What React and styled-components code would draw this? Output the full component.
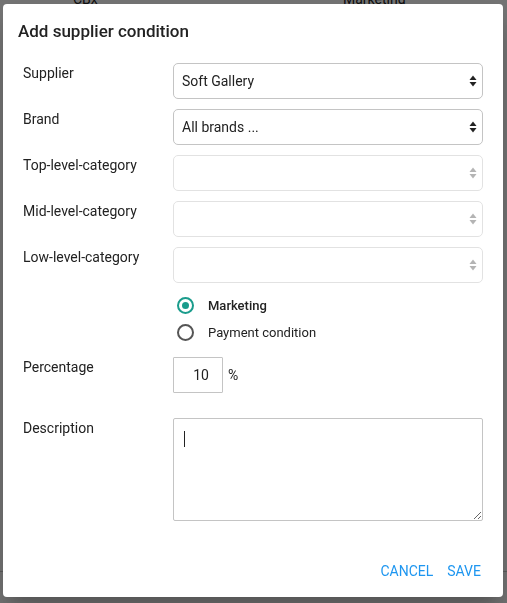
import { useState } from "react";
import styled, { createGlobalStyle } from "styled-components";

const GlobalStyle = createGlobalStyle`
  html, body {
    margin: 0;
    padding: 0;
    background: #fff;
    font-family: Roboto, "Liberation Sans", Arial, sans-serif;
    overflow: hidden;
  }
  * { box-sizing: border-box; }
`;

// page behind the dialog
const Page = styled.div`
  width: 507px;
  height: 603px;
  background: #fff;
`;
const TableRow = styled.div`
  display: grid;
  grid-template-columns: 73px 270px 1fr;
  height: 20px;
  margin-top: -11px;
  font-size: 14px;
  line-height: 20px;
  color: #222;
`;
const TableLine = styled.div`
  margin-top: 562px;
  border-top: 1px solid #c8c8c8;
`;

const Overlay = styled.div`
  position: fixed;
  inset: 0;
  background: rgba(0, 0, 0, 0.55);
  padding: 4px 4px 6px 3px;
`;

const Dialog = styled.div`
  width: 500px;
  height: 593px;
  background: #fff;
  border-radius: 4px;
  box-shadow: 0 11px 15px -7px rgba(0, 0, 0, 0.2), 0 24px 38px 3px rgba(0, 0, 0, 0.14);
  display: flex;
  flex-direction: column;
`;

const Title = styled.h2`
  margin: 0;
  padding: 16px 15px 0;
  font-size: 17px;
  font-weight: 500;
  line-height: 22px;
  color: #222;
`;

const Form = styled.div`
  display: grid;
  grid-template-columns: 150px 310px;
  row-gap: 10px;
  padding: 21px 20px 0;
  align-items: start;
`;

const Label = styled.label`
  font-size: 14px;
  line-height: 20px;
  color: #222;
`;

const SelectWrap = styled.div`
  position: relative;
  height: 36px;
`;

const Select = styled.select`
  appearance: none;
  width: 100%;
  height: 36px;
  border: 1px solid ${(p) => (p.disabled ? "#d6d6d6" : "#c4c4c4")};
  border-radius: 5px;
  background: #fff;
  padding: 0 24px 0 8px;
  font-family: inherit;
  font-size: 14px;
  color: #222;
  outline: none;
`;

const Arrows = styled.svg`
  position: absolute;
  right: 6px;
  top: 12px;
  pointer-events: none;
`;

function ArrowIcon({ muted }) {
  const c = muted ? "#b4b4b4" : "#222";
  return (
    <Arrows width="8" height="12" viewBox="0 0 8 12">
      <path d="M4 0.5 L7.5 5 L0.5 5 Z" fill={c} />
      <path d="M4 11.5 L7.5 7 L0.5 7 Z" fill={c} />
    </Arrows>
  );
}

const RadioGroup = styled.div`
  grid-column: 2;
  display: flex;
  flex-direction: column;
  gap: 8px;
  padding: 3px 0 0 4px;
  margin-bottom: 5px;
`;

const RadioRow = styled.label`
  display: flex;
  align-items: center;
  gap: 14px;
  height: 19px;
  font-size: 13px;
  font-weight: ${(p) => (p.checked ? 500 : 400)};
  color: #222;
  cursor: pointer;
`;

const RadioCircle = styled.span`
  width: 17px;
  height: 17px;
  border-radius: 50%;
  border: 2px solid ${(p) => (p.checked ? "#1a9c8c" : "#555")};
  display: flex;
  align-items: center;
  justify-content: center;
  &::after {
    content: "";
    width: 7px;
    height: 7px;
    border-radius: 50%;
    background: ${(p) => (p.checked ? "#1a9c8c" : "transparent")};
  }
`;

const PercentRow = styled.div`
  display: flex;
  align-items: center;
  gap: 5px;
  font-size: 14px;
  color: #222;
  margin-bottom: 15px;
`;

const NumberInput = styled.input`
  width: 50px;
  height: 36px;
  border: 1px solid #c4c4c4;
  border-radius: 1px;
  text-align: right;
  padding: 0 13px 0 4px;
  font-family: inherit;
  font-size: 14px;
  color: #222;
  outline: none;
`;

const DescBox = styled.div`
  position: relative;
  width: 310px;
  height: 103px;
`;

const TextArea = styled.textarea`
  width: 310px;
  height: 103px;
  border: 1px solid #c4c4c4;
  border-radius: 2px;
  padding: 12px 10px;
  font-family: inherit;
  font-size: 14px;
  color: #222;
  caret-color: #222;
  outline: none;
  resize: both;
`;

// the text caret shown in the empty textarea
const Caret = styled.span`
  position: absolute;
  left: 11px;
  top: 13px;
  width: 1px;
  height: 16px;
  background: #222;
  pointer-events: none;
`;

const Actions = styled.div`
  margin-top: auto;
  display: flex;
  justify-content: flex-end;
  padding: 0 15px 12px 0;
`;

const TextButton = styled.button`
  background: none;
  border: none;
  padding: 6px 7px;
  font-family: inherit;
  font-size: 14px;
  font-weight: 400;
  text-transform: uppercase;
  color: #1e96f0;
  cursor: pointer;
`;

export default function App() {
  const [type, setType] = useState("marketing");
  const [percent, setPercent] = useState("10");
  const [desc, setDesc] = useState("");

  return (
    <>
      <GlobalStyle />
      <Page>
        <TableRow>
          <span />
          <span>CBx</span>
          <span>Marketing</span>
        </TableRow>
        <TableLine />
      </Page>
      <Overlay>
        <Dialog>
          <Title>Add supplier condition</Title>
          <Form>
            <Label>Supplier</Label>
            <SelectWrap>
              <Select defaultValue="soft">
                <option value="soft">Soft Gallery</option>
              </Select>
              <ArrowIcon />
            </SelectWrap>

            <Label>Brand</Label>
            <SelectWrap>
              <Select defaultValue="all">
                <option value="all">All brands ...</option>
              </Select>
              <ArrowIcon />
            </SelectWrap>

            <Label>Top-level-category</Label>
            <SelectWrap>
              <Select disabled>
                <option value="" />
              </Select>
              <ArrowIcon muted />
            </SelectWrap>

            <Label>Mid-level-category</Label>
            <SelectWrap>
              <Select disabled>
                <option value="" />
              </Select>
              <ArrowIcon muted />
            </SelectWrap>

            <Label>Low-level-category</Label>
            <SelectWrap>
              <Select disabled>
                <option value="" />
              </Select>
              <ArrowIcon muted />
            </SelectWrap>

            <RadioGroup>
              <RadioRow checked={type === "marketing"} onClick={() => setType("marketing")}>
                <RadioCircle checked={type === "marketing"} />
                Marketing
              </RadioRow>
              <RadioRow checked={type === "payment"} onClick={() => setType("payment")}>
                <RadioCircle checked={type === "payment"} />
                Payment condition
              </RadioRow>
            </RadioGroup>

            <Label>Percentage</Label>
            <PercentRow>
              <NumberInput value={percent} onChange={(e) => setPercent(e.target.value)} />
              %
            </PercentRow>

            <Label>Description</Label>
            <DescBox>
              <TextArea value={desc} onChange={(e) => setDesc(e.target.value)} />
              {desc === "" && <Caret />}
            </DescBox>
          </Form>
          <Actions>
            <TextButton>Cancel</TextButton>
            <TextButton>Save</TextButton>
          </Actions>
        </Dialog>
      </Overlay>
    </>
  );
}
